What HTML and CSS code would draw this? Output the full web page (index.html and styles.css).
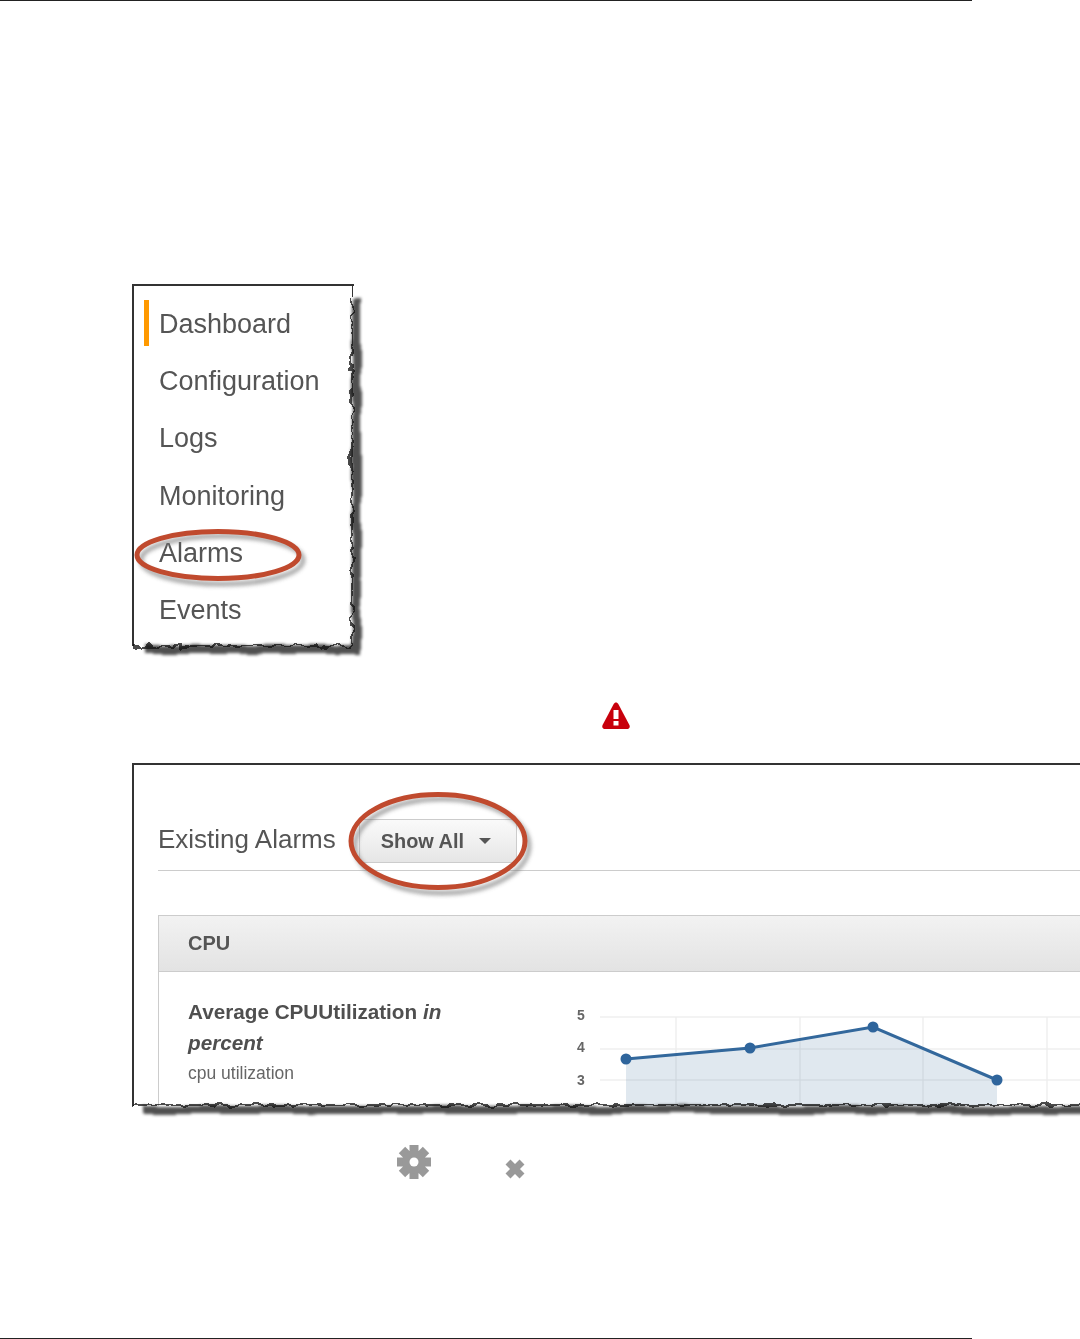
FILE: index.html
```html
<!DOCTYPE html>
<html lang="en">
<head>
<meta charset="utf-8">
<title>Alarms</title>
<link rel="stylesheet" href="styles.css">
</head>
<body>
<div class="page">
  <div class="rule"></div>

  <figure class="shot shot-nav">
    <nav class="nav">
      <a class="nav-item active">Dashboard</a>
      <a class="nav-item">Configuration</a>
      <a class="nav-item">Logs</a>
      <a class="nav-item">Monitoring</a>
      <a class="nav-item">Alarms</a>
      <a class="nav-item">Events</a>
    </nav>
    <svg class="overlay" width="260" height="400" viewBox="0 0 260 400" aria-hidden="true">
      <defs>
        <filter id="tearA" x="0" y="0" width="260" height="400" filterUnits="userSpaceOnUse" color-interpolation-filters="sRGB">
          <feTurbulence type="fractalNoise" baseFrequency="0.1" numOctaves="2" seed="4" result="n"/>
          <feDisplacementMap in="SourceGraphic" in2="n" scale="11" xChannelSelector="R" yChannelSelector="G"/>
        </filter>
        <filter id="shadowA" x="0" y="0" width="260" height="400" filterUnits="userSpaceOnUse" color-interpolation-filters="sRGB">
          <feTurbulence type="fractalNoise" baseFrequency="0.045" numOctaves="1" seed="7" result="n"/>
          <feDisplacementMap in="SourceGraphic" in2="n" scale="7" xChannelSelector="R" yChannelSelector="G"/>
          <feGaussianBlur stdDeviation="1.500"/>
        </filter>
        <filter id="softer" x="-20%" y="-30%" width="140%" height="180%"><feGaussianBlur stdDeviation="2.200"/></filter>
      </defs>
      <path class="corner" d="M219.500 0V12"/>
      <path class="tear-shadow" filter="url(#shadowA)" d="M219 14H228V369H12V360H219Z"/>
      <path class="tear-line" filter="url(#tearA)" d="M219 12V361H0"/>
      <ellipse class="ring-shadow" filter="url(#softer)" cx="89" cy="275" rx="81" ry="24"/>
      <ellipse class="ring" cx="85" cy="270" rx="81" ry="23.500"/>
    </svg>
  </figure>

  <div class="icon-row icon-row-warn">
    <svg class="warn" width="30" height="29" viewBox="0 0 30 29" aria-hidden="true">
      <path class="warn-body" d="M15 1.500c1 0 1.800.6 2.300 1.500L28.400 24c1 2-.2 4-2.400 4H4c-2.200 0-3.400-2-2.400-4L12.700 3c.5-.9 1.300-1.500 2.300-1.500Z"/>
      <rect class="warn-mark" x="12.500" y="9" width="5" height="9"/>
      <rect class="warn-mark" x="12.500" y="20" width="5" height="4.500"/>
    </svg>
  </div>

  <figure class="shot shot-alarms">
    <div class="clip">
      <div class="console">
        <header class="alarms-head">
          <h2 class="alarms-title">Existing Alarms</h2>
          <button class="show-all">Show All <span class="caret"></span></button>
        </header>
        <section class="panel">
          <h3 class="panel-head">CPU</h3>
          <div class="panel-body">
            <div class="metric">
              <p class="metric-name">Average CPUUtilization <em>in percent</em></p>
              <p class="metric-desc">cpu utilization</p>
            </div>
            <svg class="chart" width="520" height="135" viewBox="0 0 520 135" aria-hidden="true">
              <g class="grid">
                <path d="M25 45H520M25 77H520M25 108H520M101 45V135M225 45V135M348 45V135M472 45V135"/>
              </g>
              <path class="area" d="M51 87L175 76L298 55L422 108V135H51Z"/>
              <path class="line" d="M51 87L175 76L298 55L422 108"/>
              <circle class="dot" cx="51" cy="87" r="5.500"/>
              <circle class="dot" cx="175" cy="76" r="5.500"/>
              <circle class="dot" cx="298" cy="55" r="5.500"/>
              <circle class="dot" cx="422" cy="108" r="5.500"/>
              <text class="tick" x="2" y="48">5</text>
              <text class="tick" x="2" y="80">4</text>
              <text class="tick" x="2" y="113">3</text>
            </svg>
          </div>
        </section>
      </div>
    </div>
    <svg class="overlay" width="960" height="370" viewBox="0 0 960 370" aria-hidden="true">
      <defs>
        <filter id="tearB" x="-10" y="300" width="980" height="70" filterUnits="userSpaceOnUse" color-interpolation-filters="sRGB">
          <feTurbulence type="fractalNoise" baseFrequency="0.085" numOctaves="2" seed="11" result="n"/>
          <feDisplacementMap in="SourceGraphic" in2="n" scale="9" xChannelSelector="R" yChannelSelector="G"/>
        </filter>
        <filter id="shadowB" x="-10" y="300" width="980" height="70" filterUnits="userSpaceOnUse" color-interpolation-filters="sRGB">
          <feTurbulence type="fractalNoise" baseFrequency="0.03" numOctaves="1" seed="3" result="n"/>
          <feDisplacementMap in="SourceGraphic" in2="n" scale="6" xChannelSelector="R" yChannelSelector="G"/>
          <feGaussianBlur stdDeviation="1.500"/>
        </filter>
      </defs>
      <path class="tear-shadow" filter="url(#shadowB)" d="M10 342H960V350H10Z"/>
      <path class="tear-line" filter="url(#tearB)" d="M0 341H960"/>
      <ellipse class="ring-shadow" filter="url(#softer)" cx="309" cy="82" rx="87" ry="47"/>
      <ellipse class="ring" cx="305" cy="77" rx="87" ry="46.500"/>
    </svg>
  </figure>

  <div class="icon-row icon-row-tools">
    <svg class="gear" width="34" height="34" viewBox="0 0 34 34" aria-hidden="true">
      <g class="gear-teeth">
        <rect x="12.500" y="0" width="9" height="34"/>
        <rect x="12.500" y="0" width="9" height="34" transform="rotate(45 17 17)"/>
        <rect x="12.500" y="0" width="9" height="34" transform="rotate(90 17 17)"/>
        <rect x="12.500" y="0" width="9" height="34" transform="rotate(135 17 17)"/>
        <circle cx="17" cy="17" r="12"/>
      </g>
      <circle class="gear-hole" cx="17" cy="17" r="4.500"/>
    </svg>
    <svg class="close" width="22" height="22" viewBox="0 0 22 22" aria-hidden="true">
      <path d="M4 4L18 18M18 4L4 18"/>
    </svg>
  </div>

  <div class="rule rule-bottom"></div>
</div>
</body>
</html>
```

FILE: styles.css
```css
* { box-sizing: border-box; }

html, body {
  margin: 0;
  background: #fff;
}

body {
  width: 1080px;
  height: 1339px;
  overflow: hidden;
  font-family: "Liberation Sans", Arial, sans-serif;
  color: #555;
}

.page {
  display: flex;
  flex-direction: column;
  height: 1339px;
}

.rule {
  flex: none;
  width: 972px;
  height: 1px;
  background: #222;
}

.rule-bottom { margin-top: auto; }

.shot {
  position: relative;
  flex: none;
  margin: 0 0 0 132px;
  border-top: 2px solid #333;
  border-left: 2px solid #333;
}

.shot-nav {
  width: 222px;
  height: 362px;
  margin-top: 283px;
}

.shot-alarms {
  width: 948px;
  height: 343px;
}

.overlay {
  position: absolute;
  left: -1px;
  top: -1px;
  overflow: visible;
  pointer-events: none;
}

.corner {
  fill: none;
  stroke: #333;
  stroke-width: 1;
}

.tear-line {
  fill: none;
  stroke: #111;
  stroke-width: 1.500;
}

.tear-shadow { fill: #505050; }

.ring {
  fill: none;
  stroke: #c04a2e;
  stroke-width: 5;
}

.ring-shadow {
  fill: none;
  stroke: #777;
  stroke-width: 4;
  opacity: .75;
}

/* side navigation */
.nav {
  display: flex;
  flex-direction: column;
  gap: 11.200px;
  padding: 14px 0 0 10px;
  filter: blur(.35px);
}

.nav-item {
  height: 46px;
  padding-left: 10px;
  border-left: 5px solid transparent;
  font-size: 27px;
  line-height: 49px;
  color: #555;
}

.nav-item.active { border-left-color: #f90; }

/* icon rows */
.icon-row { flex: none; display: flex; }

.icon-row-warn {
  height: 117px;
  padding: 55px 0 0 601px;
}

.warn-body { fill: #c8000c; }
.warn-mark { fill: #fff; }

.icon-row-tools {
  padding: 39px 0 0 397px;
  gap: 73px;
  align-items: flex-start;
}

.gear { filter: blur(.5px); }
.gear-teeth { fill: #999; }
.gear-hole { fill: #fff; }

.close {
  margin-top: 13px;
  filter: blur(.6px);
}

.close path {
  fill: none;
  stroke: #999;
  stroke-width: 7;
}

/* alarms console */
.clip {
  height: 341px;
  overflow: hidden;
}

.console {
  width: 1000px;
  padding-left: 24px;
  filter: blur(.35px);
}

.alarms-head {
  display: flex;
  align-items: center;
  height: 106px;
  padding: 54px 0 7px;
  border-bottom: 1px solid #ccc;
}

.alarms-title {
  margin: 0 0 4px;
  font-size: 26px;
  font-weight: 400;
  line-height: 36px;
  color: #555;
}

.show-all {
  display: flex;
  align-items: center;
  width: 158px;
  height: 44px;
  margin-left: 23px;
  padding: 0 0 0 21px;
  border: 1px solid #ccc;
  border-radius: 3px;
  background: linear-gradient(#fafafa, #e6e6e6);
  font: 700 19.900px "Liberation Sans", Arial, sans-serif;
  color: #555;
  white-space: pre;
}

.caret {
  width: 0;
  height: 0;
  margin-left: 9px;
  border-top: 6px solid #555;
  border-left: 6.500px solid transparent;
  border-right: 6.500px solid transparent;
}

.panel {
  margin-top: 44px;
  border-left: 1px solid #ccc;
}

.panel-head {
  height: 57px;
  margin: 0;
  padding-left: 29px;
  border: 1px solid #ccc;
  border-left: 0;
  background: linear-gradient(#f2f2f2, #e3e3e3);
  font-size: 20px;
  font-weight: 700;
  line-height: 55px;
  color: #555;
}

.panel-body {
  display: flex;
  align-items: flex-start;
}

.metric {
  flex: none;
  width: 416px;
  padding: 24px 0 0 29px;
}

.metric-name {
  width: 280px;
  margin: 0;
  font-size: 20.700px;
  font-weight: 700;
  line-height: 31px;
  color: #4f4f4f;
}

.metric-desc {
  margin: 0;
  font-size: 17.500px;
  line-height: 31px;
  color: #666;
}

.chart { flex: none; }

.grid path {
  fill: none;
  stroke: #efefef;
  stroke-width: 1.500;
}

.area { fill: rgba(49, 100, 150, .15); }

.line {
  fill: none;
  stroke: #33689c;
  stroke-width: 3;
}

.dot { fill: #2f659c; }

.tick {
  font: 700 14px "Liberation Sans", Arial, sans-serif;
  fill: #666;
}
```
